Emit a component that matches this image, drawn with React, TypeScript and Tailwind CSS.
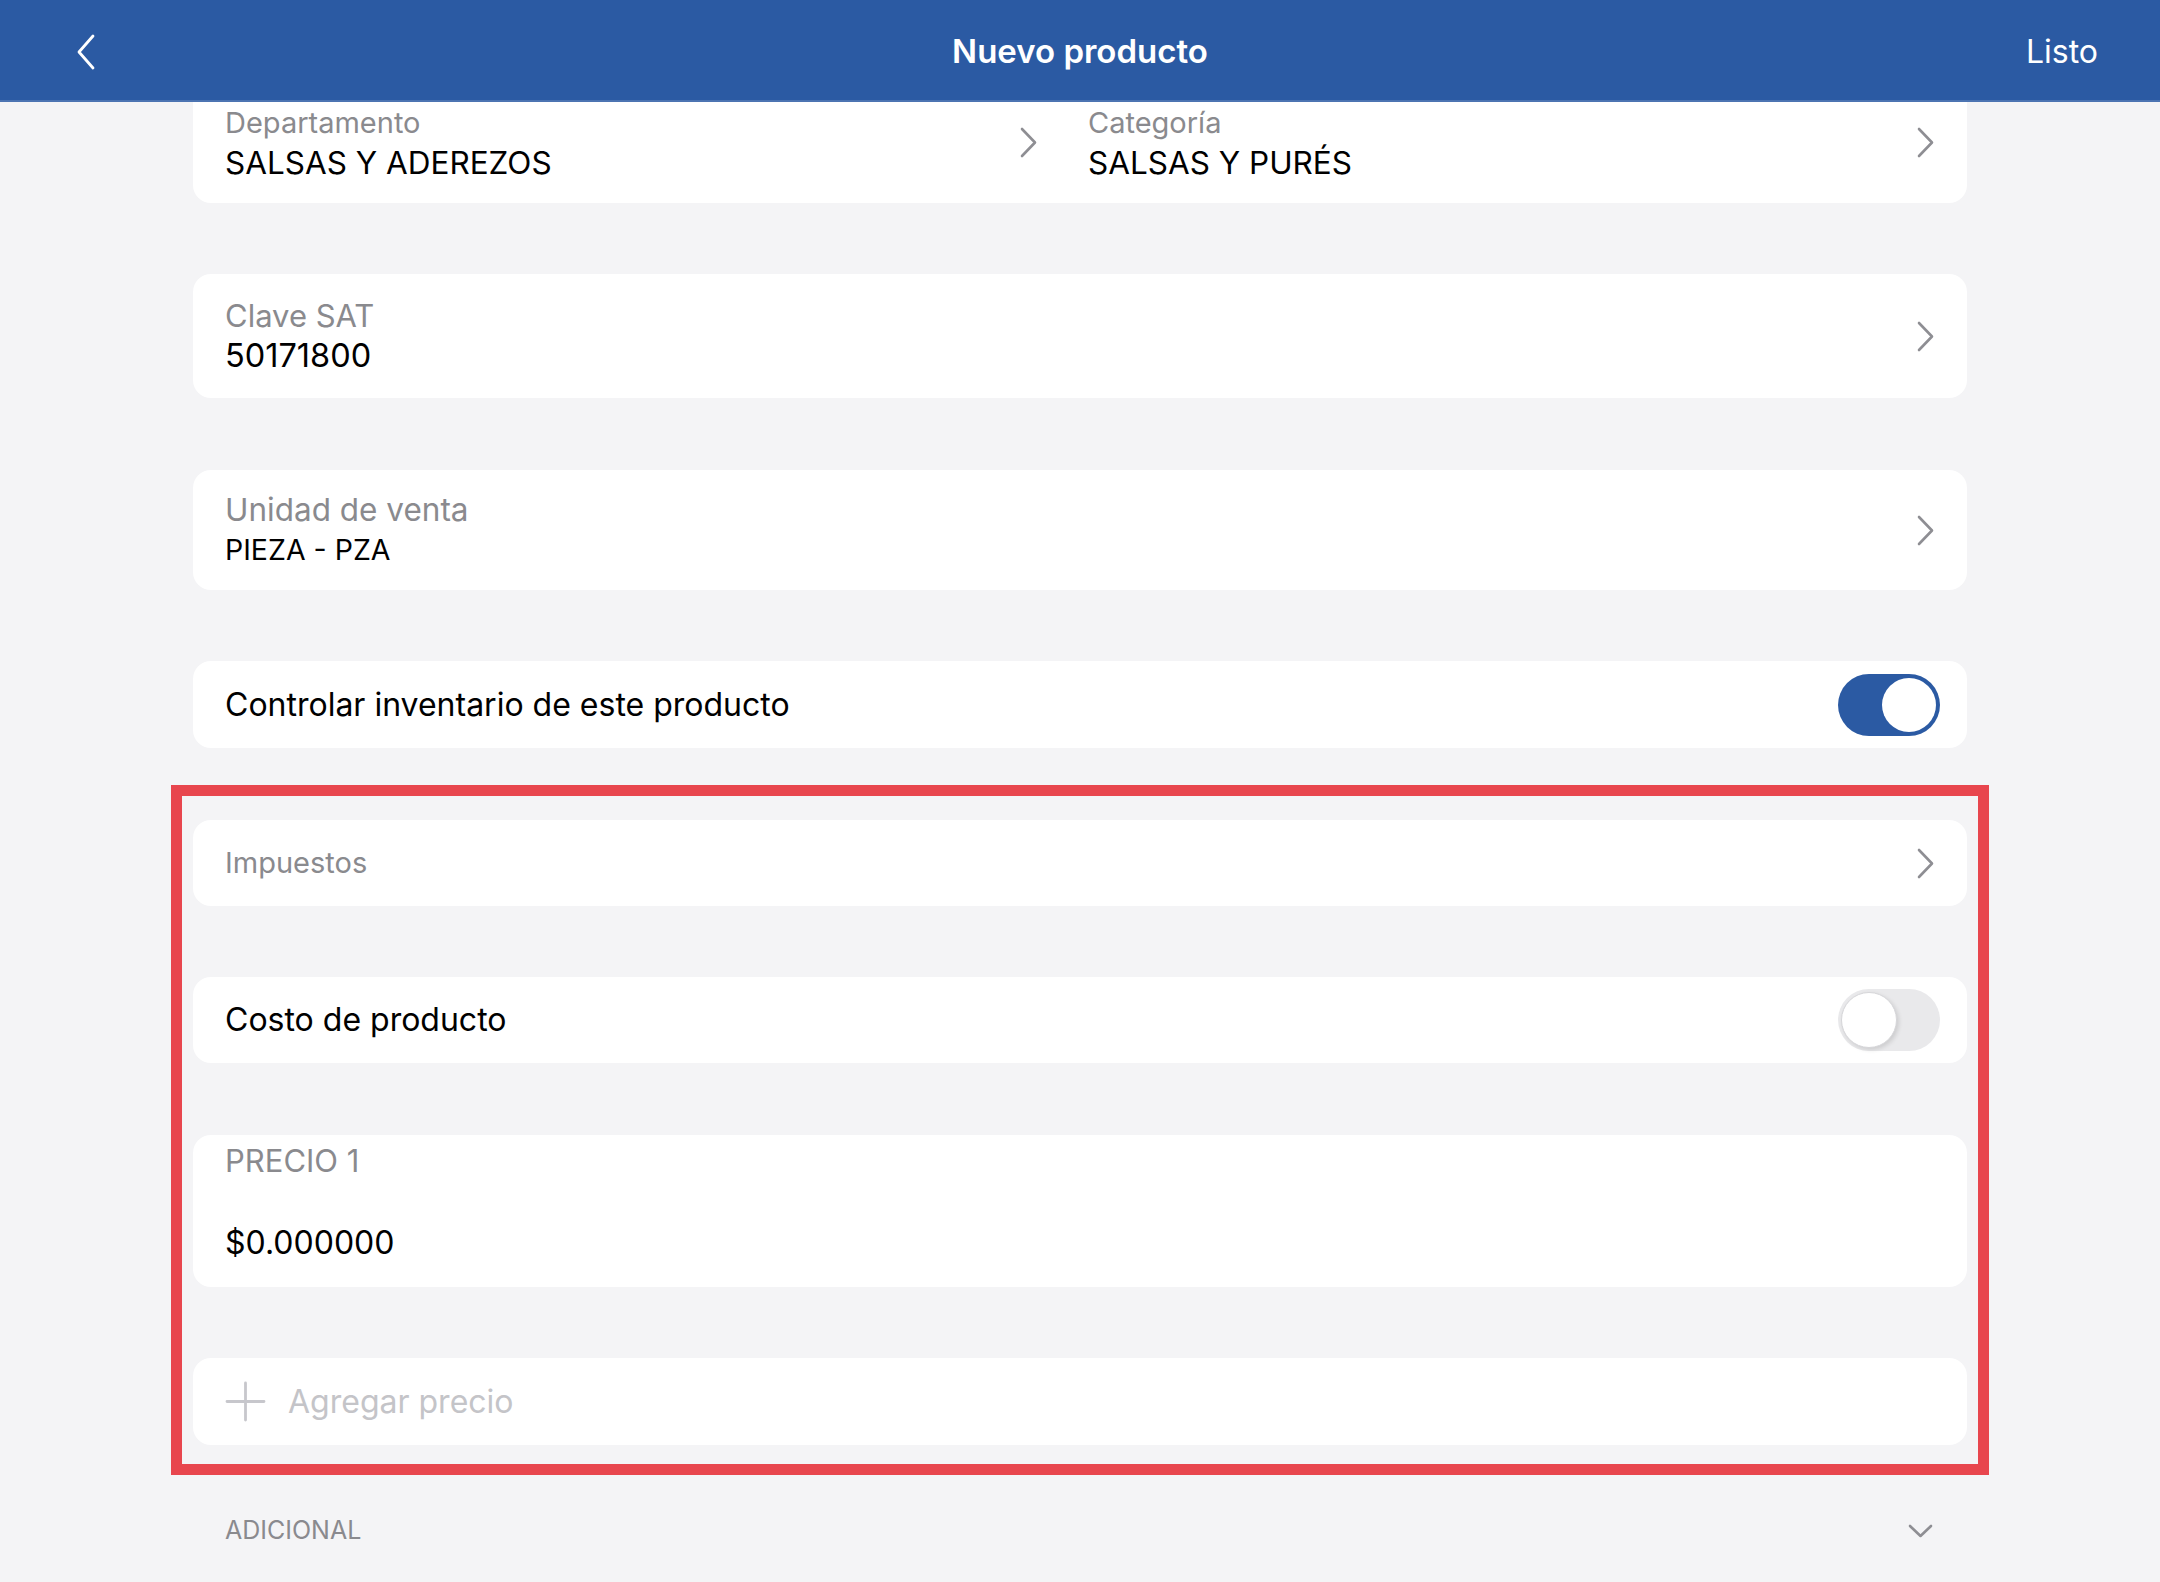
import React from 'react'

const font = { fontFamily: 'Inter, "Noto Sans", "Liberation Sans", sans-serif' }

function Chevron() {
  return (
    <svg width="17" height="31" viewBox="0 0 17 31" fill="none" className="shrink-0">
      <path d="M2 2 L15 15.5 L2 29" stroke="#8e8e93" strokeWidth="2.6" strokeLinecap="round" strokeLinejoin="round" />
    </svg>
  )
}

function Toggle({ on }: { on: boolean }) {
  return on ? (
    <div className="w-[102px] h-[62px] rounded-full bg-[#2b5aa3] flex items-center justify-end p-[4px] shrink-0">
      <div className="w-[54px] h-[54px] rounded-full bg-white" />
    </div>
  ) : (
    <div className="w-[102px] h-[62px] rounded-full bg-[#e9e9eb] flex items-center justify-start p-[3px] shrink-0">
      <div className="w-[56px] h-[56px] rounded-full bg-white border border-[#d6d6d9] shadow-[2px_2px_4px_rgba(0,0,0,0.12)]" />
    </div>
  )
}

function Field({ label, value, labelSize, valueSize }: { label: string; value: string; labelSize: string; valueSize: string }) {
  return (
    <div className="flex flex-col">
      <span className={`${labelSize} leading-[40px] text-[#8a8a8e]`}>{label}</span>
      <span className={`${valueSize} leading-[40px] text-black`}>{value}</span>
    </div>
  )
}

export default function App() {
  return (
    <div className="min-h-screen bg-[#f4f4f6]" style={font}>
      {/* ── BARRA SUPERIOR ── */}
      <div className="h-[102px] bg-[#2b5aa3] border-b-2 border-[#4c74b2] grid grid-cols-[1fr_auto_1fr] items-center px-[62px] pt-[3px]">
        <svg width="20" height="36" viewBox="0 0 20 36" fill="none" className="ml-[14px]">
          <path d="M17 2 L3 18 L17 34" stroke="white" strokeWidth="2.8" strokeLinecap="round" strokeLinejoin="round" />
        </svg>
        <span className="text-[33px] font-semibold text-white">Nuevo producto</span>
        <span className="text-[32px] text-white justify-self-end">Listo</span>
      </div>

      <div className="w-[1774px] mx-auto flex flex-col">
        {/* Departamento / Categoría */}
        <div className="h-[101px] bg-white rounded-b-[18px] flex items-center pl-8 pr-[33px] pb-[20px] gap-[51px]">
          <div className="w-[812px] flex items-center justify-between">
            <Field label="Departamento" value="SALSAS Y ADEREZOS" labelSize="text-[29px]" valueSize="text-[31.5px]" />
            <Chevron />
          </div>
          <div className="flex-1 flex items-center justify-between">
            <Field label="Categoría" value="SALSAS Y PURÉS" labelSize="text-[29px]" valueSize="text-[31.5px]" />
            <Chevron />
          </div>
        </div>

        <div className="mt-[71px] h-[124px] bg-white rounded-[18px] flex items-center justify-between pl-8 pr-[33px]">
          <Field label="Clave SAT" value="50171800" labelSize="text-[31px]" valueSize="text-[32.5px]" />
          <Chevron />
        </div>

        <div className="mt-[72px] h-[120px] bg-white rounded-[18px] flex items-center justify-between pl-8 pr-[33px]">
          <Field label="Unidad de venta" value="PIEZA - PZA" labelSize="text-[31.5px]" valueSize="text-[28.5px]" />
          <Chevron />
        </div>

        <div className="mt-[71px] h-[87px] bg-white rounded-[18px] flex items-center justify-between pl-8 pr-[27px]">
          <span className="text-[32px] text-black">Controlar inventario de este producto</span>
          <Toggle on />
        </div>

        {/* ── SECCIÓN RESALTADA ── */}
        <div className="mt-[37px] mx-[-22px] border-[11px] border-[#e8464e] px-[11px] pt-[24px] pb-[19px] flex flex-col">
          <div className="h-[86px] bg-white rounded-[18px] flex items-center justify-between pl-8 pr-[33px]">
            <span className="text-[29px] text-[#8a8a8e]">Impuestos</span>
            <Chevron />
          </div>

          <div className="mt-[71px] h-[86px] bg-white rounded-[18px] flex items-center justify-between pl-8 pr-[27px]">
            <span className="text-[32px] text-black">Costo de producto</span>
            <Toggle on={false} />
          </div>

          <div className="mt-[72px] h-[152px] bg-white rounded-[18px] flex flex-col pl-8 pt-[6px]">
            <span className="text-[31px] leading-[40px] text-[#8a8a8e]">PRECIO 1</span>
            <span className="mt-[42px] text-[32px] leading-[40px] text-black">$0.000000</span>
          </div>

          <div className="mt-[71px] h-[87px] bg-white rounded-[18px] flex items-center pl-8 gap-[22px]">
            <svg width="41" height="41" viewBox="0 0 41 41" fill="none" className="shrink-0">
              <path d="M20.5 2 V39 M2 20.5 H39" stroke="#c7c7cc" strokeWidth="2.8" strokeLinecap="round" />
            </svg>
            <span className="text-[32px] text-[#c4c4c8]">Agregar precio</span>
          </div>
        </div>

        {/* ADICIONAL */}
        <div className="mt-[36px] h-[40px] flex items-center justify-between pl-8 pr-[34px] pb-[40px] box-content">
          <span className="text-[25px] text-[#8a8a8e]">ADICIONAL</span>
          <svg width="25" height="14" viewBox="0 0 25 14" fill="none">
            <path d="M2 2 L12.5 12 L23 2" stroke="#8e8e93" strokeWidth="2.6" strokeLinecap="round" strokeLinejoin="round" />
          </svg>
        </div>
      </div>
    </div>
  )
}
